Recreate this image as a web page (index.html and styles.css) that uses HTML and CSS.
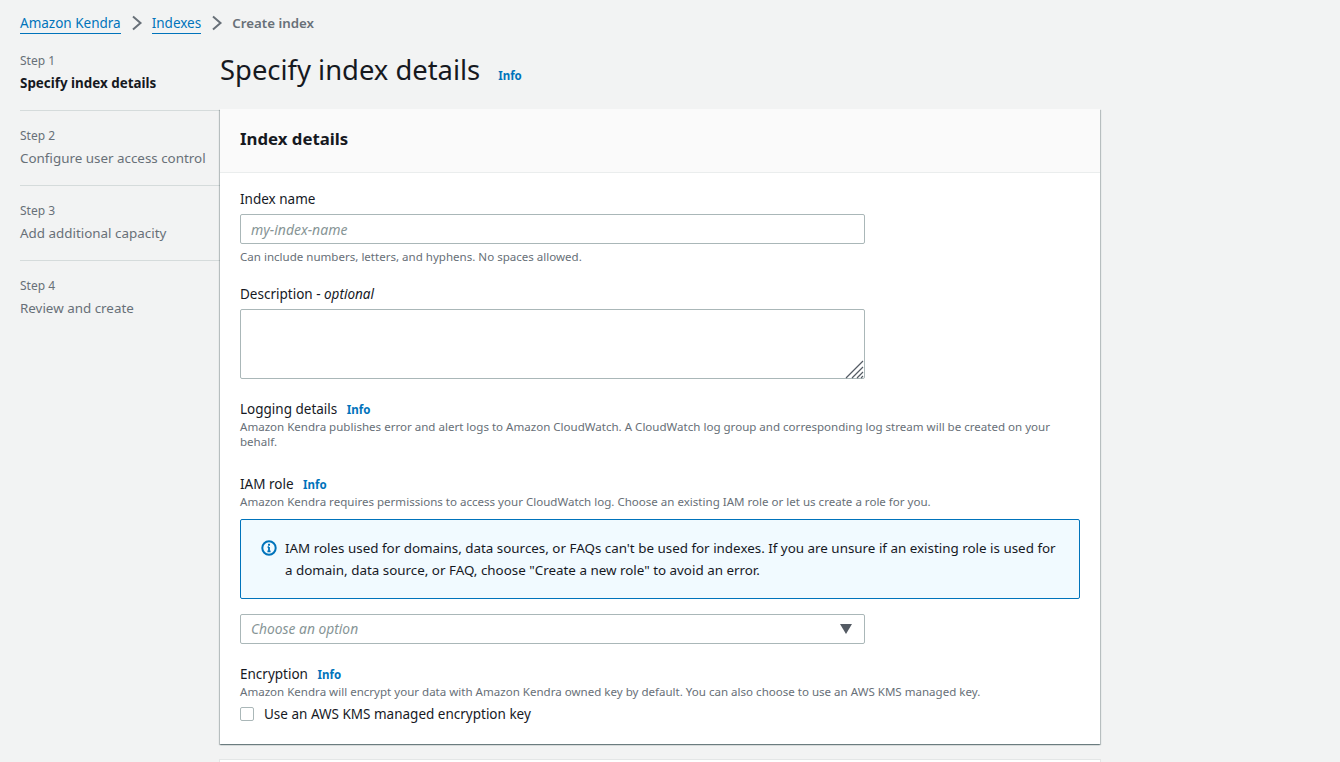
FILE: index.html
```html
<!DOCTYPE html>
<html lang="en">
<head>
<meta charset="utf-8">
<title>Create index</title>
<link rel="stylesheet" href="styles.css">
</head>
<body>
<div class="page">
  <nav class="crumbs">
    <a class="crumb-link" href="#">Amazon Kendra</a>
    <svg class="crumb-sep" viewBox="0 0 12 16" width="12" height="16"><path d="M2 1.5 9.5 8 2 14.5" fill="none" stroke="#687078" stroke-width="2"/></svg>
    <a class="crumb-link" href="#">Indexes</a>
    <svg class="crumb-sep" viewBox="0 0 12 16" width="12" height="16"><path d="M2 1.5 9.5 8 2 14.5" fill="none" stroke="#687078" stroke-width="2"/></svg>
    <span class="crumb-current">Create index</span>
  </nav>
  <div class="layout">
    <ol class="steps">
      <li class="step"><div class="step-no">Step 1</div><div class="step-name step-active">Specify index details</div></li>
      <li class="step"><div class="step-no">Step 2</div><div class="step-name">Configure user access control</div></li>
      <li class="step"><div class="step-no">Step 3</div><div class="step-name">Add additional capacity</div></li>
      <li class="step"><div class="step-no">Step 4</div><div class="step-name">Review and create</div></li>
    </ol>
    <main class="main">
      <header class="page-head">
        <h1 class="page-title">Specify index details</h1>
        <a class="info" href="#">Info</a>
      </header>
      <section class="panel">
        <h2 class="panel-title">Index details</h2>
        <div class="panel-body">
          <div class="field field-name">
            <label class="label">Index name</label>
            <input class="input" type="text" placeholder="my-index-name">
            <p class="hint hint-after">Can include numbers, letters, and hyphens. No spaces allowed.</p>
          </div>
          <div class="field field-desc">
            <label class="label">Description - <i>optional</i></label>
            <div class="textarea-wrap">
              <textarea class="textarea"></textarea>
              <svg class="resizer" viewBox="0 0 20 20" width="20" height="20"><path d="M1 19 18 2M7 19 18 8M12 19 18 13M16 19 18 17" stroke="#545b64" stroke-width="1.2" fill="none"/></svg>
            </div>
          </div>
          <div class="field field-log">
            <div class="label">Logging details <a class="info info-inline" href="#">Info</a></div>
            <p class="hint">Amazon Kendra publishes error and alert logs to Amazon CloudWatch. A CloudWatch log group and corresponding log stream will be created on your behalf.</p>
          </div>
          <div class="field field-iam">
            <div class="label">IAM role <a class="info info-inline" href="#">Info</a></div>
            <p class="hint">Amazon Kendra requires permissions to access your CloudWatch log. Choose an existing IAM role or let us create a role for you.</p>
            <div class="alert">
              <svg class="alert-icon" viewBox="0 0 16 16" width="16" height="16"><circle cx="8" cy="8" r="6.7" fill="none" stroke="#0073bb" stroke-width="2"/><path d="M8 7v4.4M6.4 11.4h3.2M6.6 7.2H8" fill="none" stroke="#0073bb" stroke-width="1.8"/><rect x="7" y="3.8" width="2" height="1.9" fill="#0073bb"/></svg>
              <p class="alert-text">IAM roles used for domains, data sources, or FAQs can't be used for indexes. If you are unsure if an existing role is used for a domain, data source, or FAQ, choose "Create a new role" to avoid an error.</p>
            </div>
            <div class="select">
              <span class="select-text">Choose an option</span>
              <svg class="select-caret" viewBox="0 0 12 10" width="12" height="10"><path d="M0 0h12L6 10z" fill="#545b64"/></svg>
            </div>
          </div>
          <div class="field field-enc">
            <div class="label">Encryption <a class="info info-inline" href="#">Info</a></div>
            <p class="hint">Amazon Kendra will encrypt your data with Amazon Kendra owned key by default. You can also choose to use an AWS KMS managed key.</p>
            <label class="check"><span class="check-box"></span><span>Use an AWS KMS managed encryption key</span></label>
          </div>
        </div>
      </section>
      <div class="panel-next"></div>
    </main>
  </div>
</div>
</body>
</html>
```
FILE: styles.css
```css
* { box-sizing: border-box; }
html, body { margin: 0; height: 762px; overflow: hidden; }
body {
  background: #f2f3f3;
  color: #16191f;
  font-family: "Noto Sans", "Liberation Sans", sans-serif;
  font-size: 13.5px;
  line-height: 22px;
}
.page { padding: 12px 0 0 20px; height: 762px; overflow: hidden; }
.crumbs { display: flex; align-items: center; height: 22px; }
.crumb-link { color: #0073bb; text-decoration: none; border-bottom: 1px solid #0073bb; line-height: 19px; height: 20px; margin-top: 1px; }
.crumb-sep { margin: 0 9px 0 10px; }
.crumb-current { color: #687078; font-weight: 600; font-size: 13.3px; }
.layout { display: grid; grid-template-columns: 200px 880px; margin-top: 18px; }
.steps { list-style: none; margin: 0; padding: 0; }
.step { height: 75px; border-bottom: 1px solid #d5dbdb; padding-top: 16px; }
.step:first-child { height: 59px; padding-top: 0; }
.step:last-child { border-bottom: 0; }
.step-no { font-size: 12px; line-height: 18px; color: #687078; }
.step-name { color: #687078; font-size: 13.4px; line-height: 22px; margin-top: 2px; }
.step-active { color: #16191f; font-weight: 700; font-size: 13.4px; }
.main { min-width: 0; }
.page-head { display: flex; align-items: baseline; height: 57px; }
.page-title { margin: 0; font-size: 27.4px; font-weight: 400; line-height: 36px; }
.info { color: #0073bb; font-size: 11.5px; font-weight: 700; text-decoration: none; margin-left: 18px; }
.info-inline { margin-left: 6px; }
.panel { background: #fff; box-shadow: 0 1px 1px 0 rgba(0,28,36,.3), 1px 1px 1px 0 rgba(0,28,36,.2), -1px 1px 1px 0 rgba(0,28,36,.2); }
.panel-title { margin: 0; height: 64px; padding: 0 20px; background: #fafafa; border-bottom: 1px solid #eaeded; font-size: 16.8px; line-height: 60px; font-weight: 700; }
.panel-body { padding: 15px 20px 19px; }
.panel-next { height: 60px; margin-top: 16px; background: #fff; box-shadow: 0 0 0 1px #e3e6e6; }
.label { display: block; line-height: 22px; }
.hint { margin: -2px 0 0; font-size: 11.56px; line-height: 15px; color: #687078; }
.hint-after { margin-top: 5px; }
.input, .textarea, .select {
  display: block;
  width: 625px;
  border: 1px solid #aab7b8;
  border-radius: 2px;
  background: #fff;
  margin: 0;
}
.input { height: 30px; margin-top: 4px; padding: 0 10px; font: italic 14px "Noto Sans", sans-serif; }
.input::placeholder { color: #879596; opacity: 1; }
.field-desc { margin-top: 19px; }
.textarea-wrap { position: relative; width: 625px; margin-top: 4px; }
.textarea { height: 70px; resize: none; }
.resizer { position: absolute; right: 0; bottom: 0; }
.field-log { margin-top: 19px; }
.field-iam { margin-top: 24px; }
.alert { display: flex; width: 840px; height: 80px; margin-top: 10px; padding: 17px 20px; background: #f1faff; border: 1px solid #0073bb; border-radius: 2px; }
.alert-icon { flex: none; margin: 3px 8px 0 0; }
.alert-text { margin: 0; font-size: 13.4px; line-height: 22px; }
.select { display: flex; align-items: center; justify-content: space-between; height: 30px; margin-top: 15px; padding: 0 12px 0 10px; }
.select-text { font-style: italic; font-size: 13.8px; color: #879596; }
.field-enc { margin-top: 19px; }
.check { display: flex; align-items: center; gap: 10px; margin-top: 4px; }
.check-box { width: 14px; height: 14px; background: #fff; border: 1px solid #aab7b8; border-radius: 2px; }
```
